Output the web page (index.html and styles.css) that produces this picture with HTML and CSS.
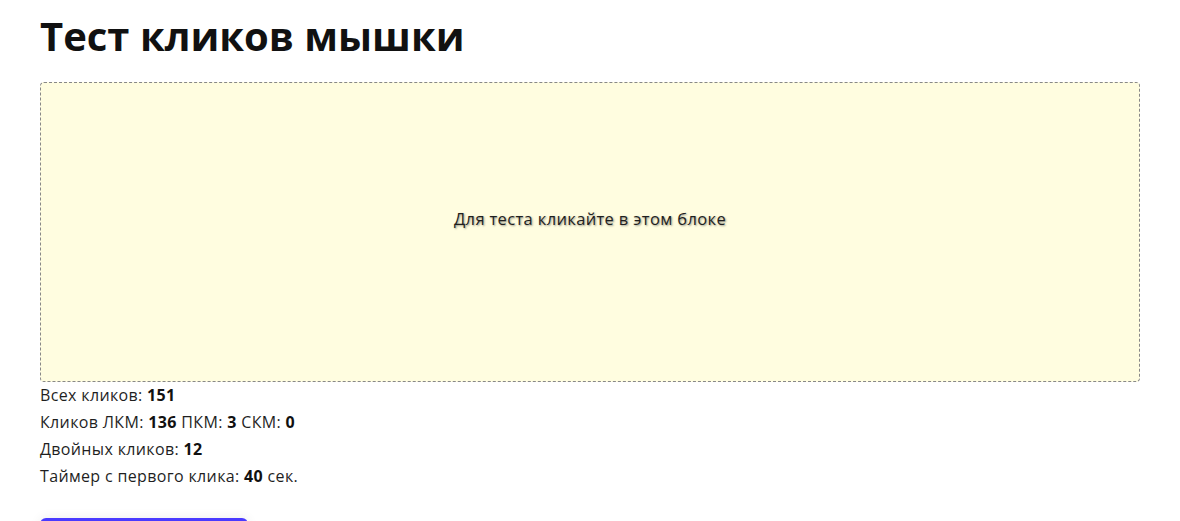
FILE: index.html
```html
<!DOCTYPE html>
<html lang="ru">
<head>
  <meta charset="UTF-8">
  <meta name="viewport" content="width=device-width, initial-scale=1.0">
  <title>Тест кликов мышки</title>
  <link rel="stylesheet" href="styles.css">
</head>
<body>
  <div class="container">
    <h1>Тест кликов мышки</h1>

    <div class="click-area" id="clickArea">
      <span>Для теста кликайте в этом блоке</span>
    </div>

    <div class="stats">
      <div>Всех кликов: <b id="total">151</b></div>
      <div>Кликов ЛКМ: <b id="left">136</b> ПКМ: <b id="right">3</b> СКМ: <b id="middle">0</b></div>
      <div>Двойных кликов: <b id="dbl">12</b></div>
      <div>Таймер с первого клика: <b id="timer">40</b> сек.</div>
    </div>

    <button class="reset-btn">Сбросить</button>
  </div>
</body>
</html>
```

FILE: styles.css
```css
body {
  margin: 0;
  font-family: 'Open Sans', sans-serif;
  font-size: 16px;
  line-height: 27px;
  letter-spacing: 0.35px;
  color: #1f1f1f;
  background-color: white;
}

.container {
  padding: 12px 40px 40px;
}

h1 {
  font-size: 40px;
  line-height: 48px;
  font-weight: bold;
  letter-spacing: 0;
  color: #111;
  margin: 0 0 22px;
}

.click-area {
  height: 270px;
  padding-bottom: 28px;
  display: flex;
  align-items: center;
  justify-content: center;
  background-color: #fffde0;
  border: 1px dashed #888;
  border-radius: 4px;
  font-size: 16.5px;
  text-shadow: 1px 1px 2px rgba(0,0,0,0.4);
  user-select: none;
}

.stats b {
  font-weight: bold;
  color: #111;
}

.reset-btn {
  display: block;
  margin-top: 28px;
  width: 208px;
  padding: 18px 20px;
  line-height: 20px;
  background-color: #4a3aff;
  color: white;
  border: none;
  border-radius: 6px;
  font-family: inherit;
  font-size: 16px;
  box-shadow: 0 0 12px rgba(0,0,0,0.08);
  cursor: pointer;
}
```
